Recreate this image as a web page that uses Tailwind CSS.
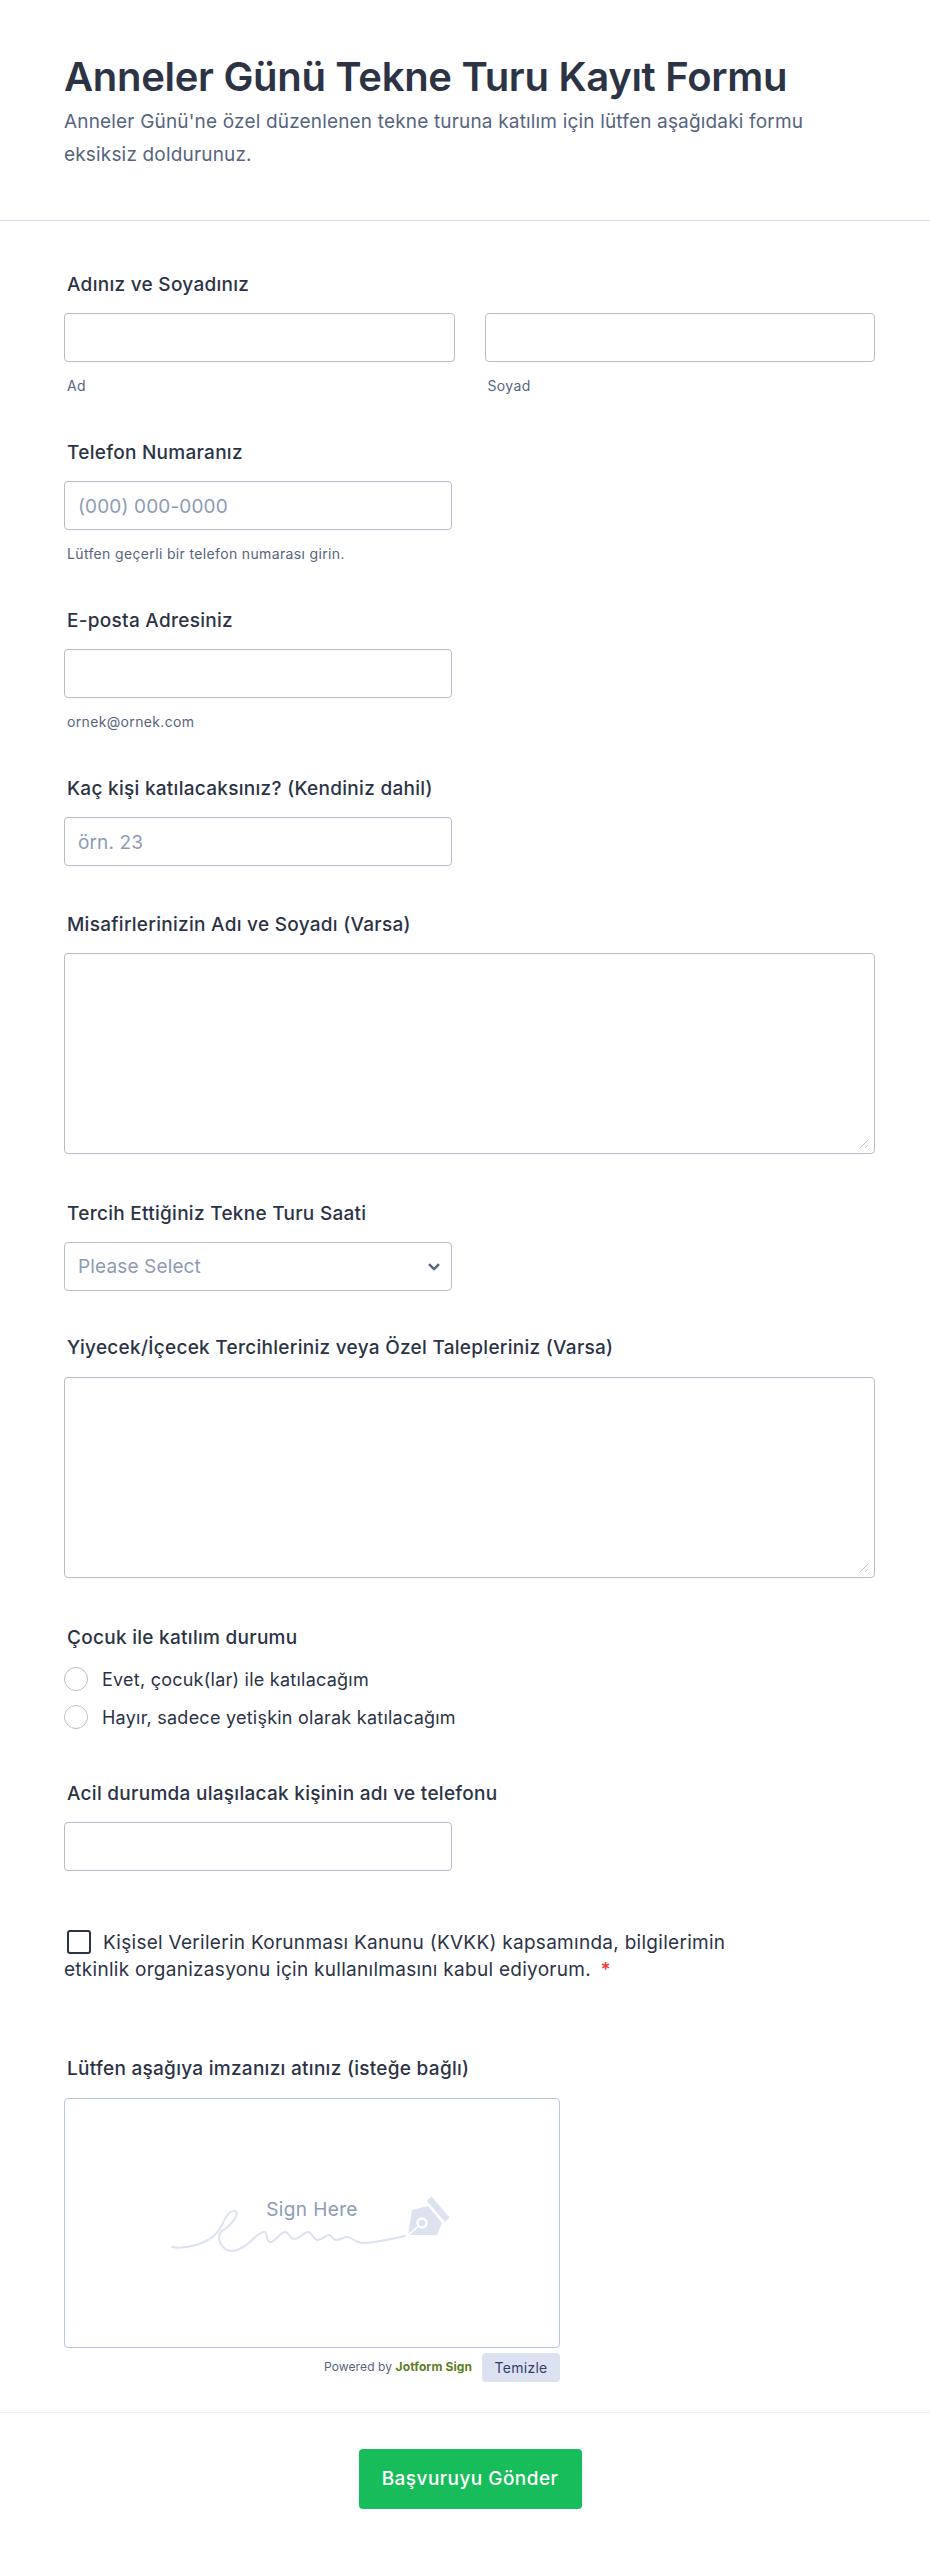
<!doctype html>
<html lang="tr">
<head>
<meta charset="utf-8">
<title>Anneler Günü Tekne Turu Kayıt Formu</title>
<script src="https://cdn.jsdelivr.net/npm/@tailwindcss/browser@4"></script>
</head>
<body class="bg-white font-['Inter','Liberation_Sans',sans-serif] text-[#2c3345]">
<div class="w-[930px] h-[2559px] overflow-hidden">
  <header class="h-[221px] px-16 pt-[52px] border-b border-[#d8dae9]">
    <h1 class="text-[40px] leading-[50px] font-semibold tracking-[-0.3px] text-[#2c3345]">Anneler Günü Tekne Turu Kayıt Formu</h1>
    <p class="mt-[3px] w-[760px] text-[19px] leading-[33px] tracking-[0.17px] text-[#57647e]">Anneler Günü'ne özel düzenlenen tekne turuna katılım için lütfen aşağıdaki formu eksiksiz doldurunuz.</p>
  </header>

  <main class="px-16 pt-[52px]">
    <section class="h-[168px]">
      <label class="block pl-[3px] text-[19px] leading-[24px] tracking-[0.28px] font-medium">Adınız ve Soyadınız</label>
      <div class="mt-[16px] flex gap-[30px] w-[811px]">
        <div class="flex-1">
          <input type="text" class="block w-full h-[49px] rounded border border-[#b8bdc9] bg-white">
          <p class="mt-[15px] pl-[3px] text-[14px] leading-[17px] tracking-[0.35px] text-[#57647e]">Ad</p>
        </div>
        <div class="flex-1">
          <input type="text" class="block w-full h-[49px] rounded border border-[#b8bdc9] bg-white">
          <p class="mt-[15px] pl-[3px] text-[14px] leading-[17px] tracking-[0.35px] text-[#57647e]">Soyad</p>
        </div>
      </div>
    </section>

    <section class="h-[168px]">
      <label class="block pl-[3px] text-[19px] leading-[24px] tracking-[0.28px] font-medium">Telefon Numaranız</label>
      <input type="text" placeholder="(000) 000-0000" class="mt-[16px] block w-[388px] h-[49px] px-[13px] pt-[2px] rounded border border-[#b8bdc9] bg-white text-[19px] tracking-[0.14px] placeholder:text-[#8d9bb5]">
      <p class="mt-[15px] pl-[3px] text-[14px] leading-[17px] tracking-[0.35px] text-[#57647e]">Lütfen geçerli bir telefon numarası girin.</p>
    </section>

    <section class="h-[168px]">
      <label class="block pl-[3px] text-[19px] leading-[24px] tracking-[0.28px] font-medium">E-posta Adresiniz</label>
      <input type="text" class="mt-[16px] block w-[388px] h-[49px] rounded border border-[#b8bdc9] bg-white">
      <p class="mt-[15px] pl-[3px] text-[14px] leading-[17px] tracking-[0.35px] text-[#57647e]">ornek@ornek.com</p>
    </section>

    <section class="h-[136px]">
      <label class="block pl-[3px] text-[19px] leading-[24px] tracking-[0.28px] font-medium">Kaç kişi katılacaksınız? (Kendiniz dahil)</label>
      <input type="text" placeholder="örn. 23" class="mt-[16px] block w-[388px] h-[49px] px-[13px] pt-[2px] rounded border border-[#b8bdc9] bg-white text-[19px] tracking-[0.14px] placeholder:text-[#8d9bb5]">
    </section>

    <section class="h-[289px]">
      <label class="block pl-[3px] text-[19px] leading-[24px] tracking-[0.28px] font-medium">Misafirlerinizin Adı ve Soyadı (Varsa)</label>
      <div class="relative mt-[16px] w-[811px] h-[201px]">
        <textarea class="block w-full h-full rounded border border-[#b8bdc9] bg-white resize-none"></textarea>
        <svg class="absolute right-[6px] bottom-[5px]" width="10" height="10" viewBox="0 0 10 10" fill="none" stroke="#c4c8d6" stroke-width="1"><path d="M1 9 L9 1 M6 9 L9 6"/></svg>
      </div>
    </section>

    <section class="h-[134px]">
      <label class="block pl-[3px] text-[19px] leading-[24px] tracking-[0.28px] font-medium">Tercih Ettiğiniz Tekne Turu Saati</label>
      <div class="mt-[16px] flex items-center justify-between w-[388px] h-[49px] pl-[13px] pr-[10px] rounded border border-[#b8bdc9] bg-white">
        <span class="pt-[2px] text-[19px] tracking-[0.14px] text-[#8d9bb5]">Please Select</span>
        <svg width="14" height="10" viewBox="0 0 14 10" fill="none" stroke="#57647e" stroke-width="2.4"><path d="M2 2.2 L7 7 L12 2.2"/></svg>
      </div>
    </section>

    <section class="h-[290px]">
      <label class="block pl-[3px] text-[19px] leading-[24px] tracking-[0.28px] font-medium">Yiyecek/İçecek Tercihleriniz veya Özel Talepleriniz (Varsa)</label>
      <div class="relative mt-[17px] w-[811px] h-[201px]">
        <textarea class="block w-full h-full rounded border border-[#b8bdc9] bg-white resize-none"></textarea>
        <svg class="absolute right-[6px] bottom-[5px]" width="10" height="10" viewBox="0 0 10 10" fill="none" stroke="#c4c8d6" stroke-width="1"><path d="M1 9 L9 1 M6 9 L9 6"/></svg>
      </div>
    </section>

    <section class="h-[156px]">
      <label class="block pl-[3px] text-[19px] leading-[24px] tracking-[0.28px] font-medium">Çocuk ile katılım durumu</label>
      <div class="mt-[17px] flex items-center gap-[14px] h-[24px]">
        <span class="w-6 h-6 rounded-full border border-[#b8bdc9] bg-white"></span>
        <span class="text-[18px] tracking-[0.24px] text-[#2c3345]">Evet, çocuk(lar) ile katılacağım</span>
      </div>
      <div class="mt-[14px] flex items-center gap-[14px] h-[24px]">
        <span class="w-6 h-6 rounded-full border border-[#b8bdc9] bg-white"></span>
        <span class="text-[18px] tracking-[0.24px] text-[#2c3345]">Hayır, sadece yetişkin olarak katılacağım</span>
      </div>
    </section>

    <section class="h-[140px]">
      <label class="block pl-[3px] text-[19px] leading-[24px] tracking-[0.28px] font-medium">Acil durumda ulaşılacak kişinin adı ve telefonu</label>
      <input type="text" class="mt-[16px] block w-[388px] h-[49px] rounded border border-[#b8bdc9] bg-white">
    </section>

    <section class="h-[135px] pt-[7px]">
      <p class="w-[700px] text-[19px] leading-[27px] tracking-[0.28px] text-[#2c3345]"><span class="inline-block align-[-5px] w-6 h-6 ml-[3px] mr-[12px] rounded-[3px] border-2 border-[#2c3345] bg-white"></span>Kişisel Verilerin Korunması Kanunu (KVKK) kapsamında, bilgilerimin etkinlik organizasyonu için kullanılmasını kabul ediyorum. <span class="ml-1 font-semibold text-[#f23a3c]">*</span></p>
    </section>

    <section>
      <label class="block pl-[3px] text-[19px] leading-[24px] tracking-[0.28px] font-medium">Lütfen aşağıya imzanızı atınız (isteğe bağlı)</label>
      <div class="relative mt-[17px] flex flex-col items-center w-[496px] h-[250px] rounded border border-[#b4c5e4] bg-white">
        <span class="mt-[100px] text-[19px] leading-[22px] tracking-[0.4px] text-[#8d9bb5]">Sign Here</span>
        <svg class="absolute left-[100px] top-[91px]" width="300" height="70" viewBox="165 2190 300 70" fill="none">
          <path d="M172 2246.7 C180 2249 195 2247 208 2240 C215 2236 219 2231 222 2225 C226 2216 231 2210 235 2211 C240 2213 233 2224 222 2231 C216 2236 220 2246 227 2250 C234 2253 244 2248 251 2241 C257 2235 262 2231 265 2232 C268 2234 266 2241 270 2242 C275 2243 280 2232 285 2232 C289 2232 290 2239 294 2239 C299 2239 304 2232 308 2232 C312 2232 312 2238 317 2240 C322 2241 325 2235 329 2235 C332 2235 332 2240 336 2240 C341 2240 344 2236 348 2237 C353 2238 355 2243 363 2243 C375 2243 392 2239 405 2236" stroke="#dde2f0" stroke-width="2" stroke-linecap="round"/>
          <path d="M412 2210 L428 2206 L442 2223 L437 2235 L408 2235 Z" fill="#dde2f0"/>
          <path d="M407 2236 L421 2224" stroke="#fff" stroke-width="1.6"/>
          <circle cx="422" cy="2223" r="4.5" fill="#dde2f0" stroke="#fff" stroke-width="2.4"/>
          <path d="M427 2201 L431.5 2196.5 L449.5 2217.5 L445 2222 Z" fill="#dde2f0"/>
        </svg>
      </div>
      <div class="mt-[5px] flex items-start justify-end w-[496px]">
        <span class="mt-[5px] mr-[10px] text-[12px] leading-[18px] tracking-[0.1px] text-[#57647e]">Powered by <b class="font-bold text-[#5c7d1e]">Jotform Sign</b></span>
        <button class="w-[78px] h-[29px] rounded bg-[#dce1f1] text-[14px] tracking-[0.3px] text-[#343c6a]">Temizle</button>
      </div>
    </section>
  </main>

  <footer class="mt-[30px] pt-[36px] pl-[10px] border-t border-[#eef0f7] flex justify-center">
    <button class="w-[223px] h-[60px] pt-[1px] rounded bg-[#18bd5b] text-[19px] tracking-[0.45px] font-medium text-white">Başvuruyu Gönder</button>
  </footer>
</div>
</body>
</html>
